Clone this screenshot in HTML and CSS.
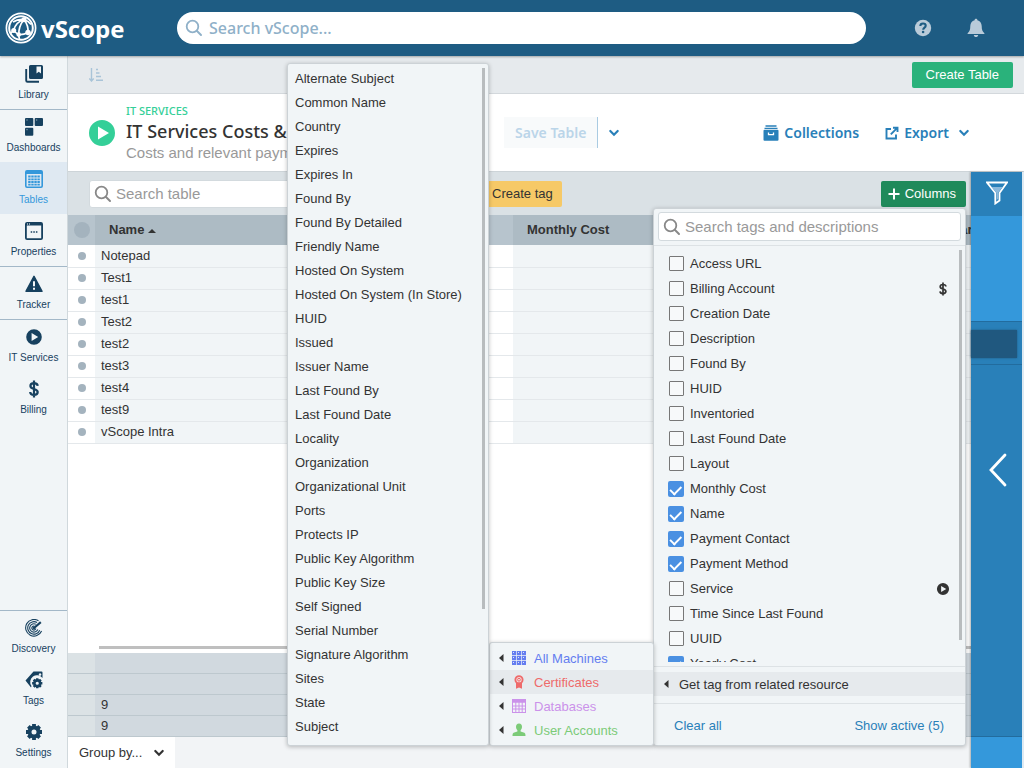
FILE: index.html
```html
<!DOCTYPE html>
<html lang="en">
<head>
    <meta charset="UTF-8">
    <meta name="viewport" content="width=device-width, initial-scale=1">
    <title>IT Services - vScope</title>
    <link rel="stylesheet" href="styles.css">
</head>
<body>
    <svg class="sprite" aria-hidden="true">
        <symbol id="i-search" viewBox="0 0 18 18"><circle cx="7.5" cy="7.5" r="5.8" fill="none" stroke="currentColor" stroke-width="1.8"/><path d="M12 12l4 4" stroke="currentColor" stroke-width="2" stroke-linecap="round"/></symbol>
        <symbol id="i-chevron" viewBox="0 0 12 12"><path d="M2.3 4l3.7 3.7L9.7 4" fill="none" stroke="currentColor" stroke-width="2.2" stroke-linecap="round"/></symbol>
        <symbol id="i-play" viewBox="0 0 18 18"><path fill-rule="evenodd" d="M9 1.200a7.800 7.800 0 1 0 0 15.600A7.800 7.800 0 0 0 9 1.200zM6.600 5.100l6.600 3.900-6.600 3.900z" fill="currentColor"/></symbol>
        <symbol id="i-dollar" viewBox="0 0 18 18"><path d="M9 .6v16.800M12.700 5.800C12.500 4 11 3.200 9 3.200S5.400 4.200 5.400 6c0 4 7.300 1.900 7.300 6 0 1.900-1.700 2.900-3.700 2.900S5.300 14 5.200 12" fill="none" stroke="currentColor" stroke-width="2.200"/></symbol>
        <symbol id="i-left" viewBox="0 0 6 10"><path d="M5.500 1v8L1 5z" fill="currentColor"/></symbol>
        <symbol id="i-gear" viewBox="0 0 18 18"><path d="M9 1v16M1 9h16M3.350 3.350l11.300 11.300M14.650 3.350l-11.300 11.300" stroke="currentColor" stroke-width="3.800"/><circle cx="9" cy="9" r="4.500" fill="#f1f5f7" stroke="currentColor" stroke-width="4"/></symbol>
    </svg>

    <header class="topbar">
        <a class="logo" href="#">
            <svg width="32" height="32" viewBox="0 0 32 32" fill="none" stroke="#fff">
                <circle cx="16" cy="16" r="14.600" stroke-width="1.700"/>
                <circle cx="16" cy="16" r="11.800" stroke-width="2"/>
                <path d="M19 7.500C14 9 10 13 8.500 18.500M19 7.500c-4 5-5.500 10-5 15M19 7.500c3 4 4.500 8 4 13M8.500 18.500c2 2 3.500 3 5 4 3.500.5 6.500-.5 9.500-2M8 10c3-2 7-3 11-2.500 3 1 5 2.500 7 5M8.500 18.500l-3 3M13.500 22.500l1 5M23 20.500l3 1" stroke-width="1.700"/>
                <g fill="#fff" stroke="none"><circle cx="19" cy="7.800" r="2.500"/><circle cx="8.700" cy="18.500" r="2.500"/><circle cx="13.700" cy="22.500" r="2.300"/><circle cx="23" cy="20.500" r="2.700"/></g>
            </svg>
            <span>vScope</span>
        </a>
        <label class="global-search">
            <svg width="18" height="18"><use href="#i-search"/></svg>
            <input type="search" placeholder="Search vScope..." aria-label="Search vScope">
        </label>
        <div class="topbar-actions">
            <button type="button" aria-label="Help">
                <svg width="18" height="18" viewBox="0 0 18 18"><circle cx="9" cy="9" r="8.200" fill="currentColor"/><path d="M6.300 7c.1-1.700 1.200-2.500 2.700-2.500s2.700.9 2.700 2.200c0 1.900-2.500 1.900-2.500 4" fill="none" stroke="#1e5c83" stroke-width="2.100"/><circle cx="9.100" cy="13" r="1.300" fill="#1e5c83"/></svg>
            </button>
            <button type="button" aria-label="Notifications">
                <svg width="18" height="20" viewBox="0 0 18 20"><path d="M9 .8c.9 0 1.400.6 1.400 1.400 2.700.6 4.200 2.800 4.300 5.700.1 3.600.5 5.300 2.700 7.300v.9H.6v-.9c2.200-2 2.600-3.700 2.700-7.300.1-2.900 1.600-5.100 4.300-5.700 0-.8.5-1.400 1.400-1.400zM6.800 17h4.400c-.2 1.400-1 2-2.200 2s-2-.6-2.200-2z" fill="currentColor"/></svg>
            </button>
        </div>
    </header>

    <div class="layout">
        <nav class="sidebar">
            <div class="nav-group">
                <a href="#"><svg width="18" height="18" viewBox="0 0 18 18"><path d="M1.200 4v11.500c0 .8.500 1.300 1.300 1.300H14" fill="none" stroke="currentColor" stroke-width="1.900"/><path fill-rule="evenodd" d="M5.500 0h11A1.500 1.500 0 0 1 18 1.500v11a1.500 1.500 0 0 1-1.500 1.500h-11A1.500 1.500 0 0 1 4 12.500v-11A1.500 1.500 0 0 1 5.500 0zM11.500 1.500v7L13.700 6.800 16 8.500v-7z" fill="currentColor"/></svg>Library</a>
            </div>
            <div class="nav-group">
                <a href="#"><svg width="18" height="18" viewBox="0 0 18 18" fill="currentColor"><rect width="8.300" height="8" rx="1"/><rect x="9.700" width="8.300" height="8" rx="1"/><rect y="9.700" width="8.300" height="8" rx="1"/><path d="M1.500 2h1M11.200 2h1M1.500 11.700h1" stroke="#b9cbd6" stroke-width="1"/></svg>Dashboards</a>
                <a href="#" class="active"><svg width="18" height="18" viewBox="0 0 18 18"><rect x=".8" y=".8" width="16.400" height="16.400" rx="1.200" fill="none" stroke="currentColor" stroke-width="1.600"/><path d="M1 2.500h16" stroke="currentColor" stroke-width="3"/><path d="M3.200 6.500h11.600M3.200 9.300h11.600M3.200 12h11.600M3.200 14.700h11.600" stroke="currentColor" stroke-width="1.800" stroke-dasharray="2.400 .67"/></svg>Tables</a>
                <a href="#"><svg width="18" height="18" viewBox="0 0 18 18"><rect x=".9" y=".9" width="16.200" height="16.200" rx="1.200" fill="none" stroke="currentColor" stroke-width="1.800"/><path d="M1 2.200h16" stroke="currentColor" stroke-width="2.600"/><path d="M5.700 10h1.500M8.300 10h1.500M10.900 10h1.500" stroke="currentColor" stroke-width="1.600"/><path d="M2 2h1M4 2h1" stroke="#fff"/></svg>Properties</a>
            </div>
            <div class="nav-group">
                <a href="#"><svg width="18" height="18" viewBox="0 0 18 18"><path d="M9 1.300L17 16.300H1z" fill="currentColor" stroke="currentColor" stroke-width="1.500" stroke-linejoin="round"/><path d="M9 6.300v5M9 12.800v2" stroke="#fff" stroke-width="1.900"/></svg>Tracker</a>
            </div>
            <div class="nav-group">
                <a href="#"><svg width="18" height="18"><use href="#i-play"/></svg>IT Services</a>
                <a href="#"><svg width="18" height="18"><use href="#i-dollar"/></svg>Billing</a>
            </div>
            <div class="nav-group nav-bottom">
                <a href="#"><svg width="18" height="18" viewBox="0 0 18 18" fill="none" stroke="currentColor"><path d="M13.500 1.800A8.300 8.300 0 1 0 16.600 12M12 3.500A6.200 6.200 0 1 0 14.700 11.200M10.800 5.200A4.200 4.200 0 1 0 12.800 10.500M9.500 7.200A2 2 0 1 0 10.800 9.500" stroke-width="1.100"/><path d="M9 9l6.800-5.800" stroke-width="2.200"/><circle cx="9" cy="9" r="1" fill="currentColor"/></svg>Discovery</a>
                <a href="#"><svg width="20" height="18" viewBox="0 0 20 18"><path fill-rule="evenodd" d="M9.500 .5h8q1 0 1 1v5.500a6.300 6.300 0 0 0-11 8l-.5 1.500-5.500-7zM16 2.200a1.300 1.300 0 1 0 .1 0z" fill="currentColor"/><svg x="7.500" y="6.500" width="11.500" height="11.500"><use href="#i-gear"/></svg></svg>Tags</a>
                <a href="#"><svg width="18" height="18"><use href="#i-gear"/></svg>Settings</a>
            </div>
        </nav>

        <main class="main">
            <div class="actions-bar">
                <button type="button" class="sort-btn" aria-label="Sort">
                    <svg width="14" height="14" viewBox="0 0 14 14" fill="none" stroke="currentColor" stroke-width="1.400"><path d="M2.500 0v12.500M.3 10.500l2.200 2.500 2.200-2.500M7 1.500h2M7 5h3.500M7 8.500h5M7 12.300h7"/></svg>
                </button>
                <button type="button" class="btn btn-create">Create Table</button>
            </div>

            <div class="title-bar">
                <svg class="title-icon" width="30" height="30"><use href="#i-play"/></svg>
                <div class="title-text">
                    <div class="category">IT Services</div>
                    <h1>IT Services Costs &amp; Payments</h1>
                    <p>Costs and relevant payment information for services</p>
                </div>
                <div class="save-group">
                    <button type="button" class="save-btn" disabled>Save Table</button>
                    <button type="button" class="save-more" aria-label="Save options"><svg width="12" height="12"><use href="#i-chevron"/></svg></button>
                </div>
                <div class="title-links">
                    <a href="#"><svg width="16" height="16" viewBox="0 0 16 16"><path d="M2.500 1h11M1.500 3.300h13" stroke="currentColor" stroke-width="1.300"/><rect x=".5" y="4.800" width="15" height="11" rx="1" fill="currentColor"/><path d="M5.500 7.500v2.200h5V7.500" fill="none" stroke="#fff" stroke-width="1.300"/></svg>Collections</a>
                    <a href="#"><svg width="14" height="14" viewBox="0 0 14 14" fill="none" stroke="currentColor" stroke-width="1.900"><path d="M6 3H1.500v9.500H11V8.500M8 1.700h4.500V6M12 2.200L5.800 8.400"/></svg>Export<svg class="caret" width="12" height="12"><use href="#i-chevron"/></svg></a>
                </div>
            </div>

            <div class="workspace">
                <section class="table-area">
                    <div class="table-tools">
                        <label class="field table-search">
                            <svg width="18" height="18"><use href="#i-search"/></svg>
                            <input type="search" placeholder="Search table" aria-label="Search table">
                        </label>
                        <button type="button" class="btn btn-tag">Create tag</button>
                        <button type="button" class="btn btn-columns"><svg width="12" height="12" viewBox="0 0 12 12"><path d="M6 .5v11M.5 6h11" stroke="currentColor" stroke-width="2"/></svg>Columns</button>
                    </div>

                    <div class="table-scroll">
                        <table class="grid">
                            <thead>
                                <tr><th class="pick"><span class="dot dot-lg"></span></th><th>Name <span class="sorted"></span></th><th>Payment Contact</th><th>Monthly Cost</th><th>Payment Method</th><th>Yearly Cost</th></tr>
                            </thead>
                            <tbody>
                                <tr><td class="pick"><span class="dot"></span></td><td>Notepad</td><td></td><td></td><td></td><td></td></tr>
                                <tr><td class="pick"><span class="dot"></span></td><td>Test1</td><td></td><td></td><td></td><td></td></tr>
                                <tr><td class="pick"><span class="dot"></span></td><td>test1</td><td></td><td></td><td></td><td></td></tr>
                                <tr><td class="pick"><span class="dot"></span></td><td>Test2</td><td></td><td></td><td></td><td></td></tr>
                                <tr><td class="pick"><span class="dot"></span></td><td>test2</td><td></td><td></td><td></td><td></td></tr>
                                <tr><td class="pick"><span class="dot"></span></td><td>test3</td><td></td><td></td><td></td><td></td></tr>
                                <tr><td class="pick"><span class="dot"></span></td><td>test4</td><td></td><td></td><td></td><td></td></tr>
                                <tr><td class="pick"><span class="dot"></span></td><td>test9</td><td></td><td></td><td></td><td></td></tr>
                                <tr><td class="pick"><span class="dot"></span></td><td>vScope Intra</td><td></td><td></td><td></td><td></td></tr>
                            </tbody>
                        </table>
                    </div>
                    <div class="h-scroll"></div>
                    <div class="summary-wrap">
                        <table class="grid summary">
                            <tbody>
                                <tr><td class="pick"></td><td></td><td></td><td></td><td></td><td></td></tr>
                                <tr><td class="pick"></td><td></td><td></td><td></td><td></td><td></td></tr>
                                <tr><td class="pick"></td><td>9</td><td></td><td></td><td></td><td></td></tr>
                                <tr><td class="pick"></td><td>9</td><td></td><td></td><td></td><td></td></tr>
                            </tbody>
                        </table>
                    </div>
                    <div class="bottom-bar">
                        <div class="group-by">
                            <select aria-label="Group by"><option>Group by...</option></select>
                            <svg width="12" height="12"><use href="#i-chevron"/></svg>
                        </div>
                    </div>

                    <!-- column picker with its two fly-out menus -->
                    <div class="panel picker">
                        <div class="picker-search">
                            <label class="field">
                                <svg width="18" height="18"><use href="#i-search"/></svg>
                                <input type="search" placeholder="Search tags and descriptions" aria-label="Search tags and descriptions">
                            </label>
                        </div>
                        <div class="picker-list">
                            <label><input type="checkbox">Access URL</label>
                            <label><input type="checkbox">Billing Account<svg width="14" height="14"><use href="#i-dollar"/></svg></label>
                            <label><input type="checkbox">Creation Date</label>
                            <label><input type="checkbox">Description</label>
                            <label><input type="checkbox">Found By</label>
                            <label><input type="checkbox">HUID</label>
                            <label><input type="checkbox">Inventoried</label>
                            <label><input type="checkbox">Last Found Date</label>
                            <label><input type="checkbox">Layout</label>
                            <label><input type="checkbox" checked>Monthly Cost</label>
                            <label><input type="checkbox" checked>Name</label>
                            <label><input type="checkbox" checked>Payment Contact</label>
                            <label><input type="checkbox" checked>Payment Method</label>
                            <label><input type="checkbox">Service<svg width="14" height="14"><use href="#i-play"/></svg></label>
                            <label><input type="checkbox">Time Since Last Found</label>
                            <label><input type="checkbox">UUID</label>
                            <label><input type="checkbox" checked>Yearly Cost</label>
                            <span class="thumb"></span>
                        </div>
                        <div class="picker-related">
                            <button type="button"><svg width="6" height="10"><use href="#i-left"/></svg>Get tag from related resource</button>
                        </div>
                        <div class="picker-footer">
                            <a href="#">Clear all</a>
                            <a href="#">Show active (5)</a>
                        </div>

                        <div class="panel related">
                            <button type="button" class="machines"><svg width="6" height="10"><use href="#i-left"/></svg><svg width="14" height="14" viewBox="0 0 14 14" fill="currentColor"><path d="M0 0h4.200v4.200H0zM4.900 0h4.200v4.200H4.900zM9.800 0H14v4.200H9.800zM0 4.900h4.200v4.200H0zM4.900 4.900h4.200v4.200H4.900zM9.800 4.900H14v4.200H9.800zM0 9.800h4.200V14H0zM4.900 9.800h4.200V14H4.900zM9.800 9.800H14V14H9.800z"/><path d="M1 1.500h1M6 1.500h1M11 1.500h1M1 6.500h1M6 6.500h1M11 6.500h1M1 11.500h1M6 11.500h1M11 11.500h1" stroke="#fff" stroke-width=".8"/></svg>All Machines</button>
                            <button type="button" class="certificates"><svg width="6" height="10"><use href="#i-left"/></svg><svg width="14" height="14" viewBox="0 0 14 14"><path d="M4 7.500v6.200l3-1.200 3 1.200V7.500z" fill="currentColor"/><circle cx="7" cy="4.700" r="3.600" fill="#f6dede" stroke="currentColor" stroke-width="1.900"/><circle cx="7" cy="4.700" r="1.400" fill="none" stroke="currentColor"/></svg>Certificates</button>
                            <button type="button" class="databases"><svg width="6" height="10"><use href="#i-left"/></svg><svg width="14" height="14" viewBox="0 0 14 14"><rect x=".5" y=".5" width="13" height="13" fill="none" stroke="currentColor"/><path d="M0 2h14" stroke="currentColor" stroke-width="3.500"/><path d="M0 7h14M0 10h14M3.800 3v11M7 3v11M10.200 3v11" stroke="currentColor"/></svg>Databases</button>
                            <button type="button" class="accounts"><svg width="6" height="10"><use href="#i-left"/></svg><svg width="14" height="14" viewBox="0 0 14 14"><path d="M7 .5c2 0 3 1.300 3 3.200 0 1.600-.6 2.700-1.400 3.500v1.300l3.800 1.300c.8.4 1.100 1.200 1.100 3.200H.5c0-2 .3-2.800 1.100-3.200l3.800-1.300V7.200C4.600 6.400 4 5.300 4 3.700 4 1.800 5 .5 7 .5z" fill="currentColor"/></svg>User Accounts</button>
                        </div>

                        <div class="panel tag-menu">
                            <ul>
                                <li>Alternate Subject</li>
                                <li>Common Name</li>
                                <li>Country</li>
                                <li>Expires</li>
                                <li>Expires In</li>
                                <li>Found By</li>
                                <li>Found By Detailed</li>
                                <li>Friendly Name</li>
                                <li>Hosted On System</li>
                                <li>Hosted On System (In Store)</li>
                                <li>HUID</li>
                                <li>Issued</li>
                                <li>Issuer Name</li>
                                <li>Last Found By</li>
                                <li>Last Found Date</li>
                                <li>Locality</li>
                                <li>Organization</li>
                                <li>Organizational Unit</li>
                                <li>Ports</li>
                                <li>Protects IP</li>
                                <li>Public Key Algorithm</li>
                                <li>Public Key Size</li>
                                <li>Self Signed</li>
                                <li>Serial Number</li>
                                <li>Signature Algorithm</li>
                                <li>Sites</li>
                                <li>State</li>
                                <li>Subject</li>
                                <li>System Title</li>
                            </ul>
                            <span class="thumb"></span>
                        </div>
                    </div>
                </section>

                <aside class="filter-rail">
                    <button type="button" class="filter-btn" aria-label="Filter">
                        <svg width="22" height="24" viewBox="0 0 22 24"><path d="M1 1.500h20l-7.500 10.500v7.500L9.300 22.500V12z" fill="none" stroke="#fff" stroke-width="1.800"/><path d="M5.500 6h11l-4.500 6v6l-1.500 1v-7z" fill="#8bb9dc"/></svg>
                    </button>
                    <div class="filter-space"></div>
                    <div class="filter-item"><span></span></div>
                    <button type="button" class="filter-open" aria-label="Open filter panel">
                        <svg width="18" height="34" viewBox="0 0 18 34"><path d="M16 2L2 17l14 15" fill="none" stroke="#fff" stroke-width="2.800" stroke-linecap="round"/></svg>
                    </button>
                </aside>
            </div>
        </main>
    </div>
</body>
</html>
```
FILE: styles.css
```css
* {
    box-sizing: border-box;
}

body {
    margin: 0;
    height: 100vh;
    display: flex;
    flex-direction: column;
    overflow: hidden;
    font-family: "Liberation Sans", Arial, sans-serif;
    font-size: 13px;
    color: #333;
    background: #f2f4f6;
}

button, input, select {
    font: inherit;
    color: inherit;
    border: 0;
    background: none;
    margin: 0;
    padding: 0;
}

button {
    cursor: pointer;
}

a {
    color: #2980b9;
    text-decoration: none;
}

svg {
    flex: none;
}

.sprite {
    position: absolute;
    width: 0;
    height: 0;
}

/* top bar */
.topbar {
    display: flex;
    align-items: center;
    height: 56px;
    flex: none;
    background: #1e5c83;
    box-shadow: 0 1px 2px rgba(0, 0, 0, 0.3);
    z-index: 2;
}

.logo {
    display: flex;
    align-items: center;
    gap: 4px;
    width: 177px;
    padding-left: 5px;
    color: #fff;
    font-family: "Open Sans", sans-serif;
    font-size: 24px;
    font-weight: 700;
}

.global-search {
    display: flex;
    align-items: center;
    gap: 6px;
    flex: 1;
    height: 32px;
    padding: 0 16px 0 8px;
    border-radius: 16px;
    background: #fff;
    color: #8fb0c8;
    font-family: "Noto Sans", sans-serif;
    font-size: 16px;
    font-weight: 500;
}

input {
    flex: 1;
    min-width: 0;
    outline: 0;
}

input::placeholder {
    color: #8fb0c8;
    opacity: 1;
}

.topbar-actions {
    display: flex;
    justify-content: flex-end;
    gap: 35px;
    width: 158px;
    padding-right: 39px;
    color: #b9cbd9;
}

.topbar-actions button {
    display: flex;
    align-items: center;
}

.layout {
    display: flex;
    flex: 1;
    min-height: 0;
}

/* left navigation */
.sidebar {
    display: flex;
    flex-direction: column;
    width: 68px;
    flex: none;
    padding: 1px 0;
    background: #f1f5f7;
    border-right: 1px solid #d0d8dc;
}

.nav-group + .nav-group {
    border-top: 1px solid #a3b8c8;
}

.nav-group a {
    display: flex;
    flex-direction: column;
    align-items: center;
    gap: 4px;
    height: 52px;
    padding-top: 8px;
    font-size: 10px;
    line-height: 16px;
    color: #17415f;
}

.nav-group a.active {
    background: #dfe9f2;
    color: #3498db;
}

.nav-group.nav-bottom {
    margin-top: auto;
}

/* header rows */
.main {
    display: flex;
    flex-direction: column;
    flex: 1;
    min-width: 0;
}

.actions-bar {
    display: flex;
    align-items: center;
    justify-content: space-between;
    height: 38px;
    padding: 0 11px 0 21px;
    background: #e6eaed;
    border-bottom: 1px solid #d3d8dc;
}

.sort-btn {
    color: #a9c4d8;
    display: flex;
}

.btn {
    display: flex;
    align-items: center;
    gap: 5px;
    height: 26px;
    border-radius: 2px;
}

.btn-create {
    padding: 0 14px;
    background: #2ab27b;
    color: #fff;
}

.title-bar {
    display: flex;
    align-items: center;
    height: 78px;
    padding: 0 54px 0 19px;
    background: #fff;
    border-bottom: 1px solid #cdd4d8;
}

.title-icon {
    color: #34cf98;
}

.title-text {
    flex: 0 1 387px;
    min-width: 0;
    padding-left: 9px;
    white-space: nowrap;
    overflow: hidden;
}

.category {
    font-family: "Noto Sans", sans-serif;
    font-size: 11px;
    line-height: 14px;
    text-transform: uppercase;
    color: #34cf98;
    font-weight: 500;
}

.title-text h1 {
    margin: 0;
    font-family: "Noto Sans", sans-serif;
    font-size: 18px;
    line-height: 26px;
    font-weight: 500;
}

.title-text p {
    margin: 0;
    font-size: 15px;
    line-height: 17px;
    color: #999;
}

.save-group, .title-links {
    display: flex;
    align-items: center;
    font-family: "Noto Sans", sans-serif;
    font-size: 14px;
    font-weight: 600;
}

.save-btn {
    height: 31px;
    padding: 0 11px;
    background: #f8fafb;
    color: #bbd5e9;
    border-right: 1px solid #a9cbe2;
}

.save-more {
    display: flex;
    padding: 10px;
    color: #2980b9;
}

.title-links {
    gap: 26px;
    margin-left: auto;
}

.title-links a {
    display: flex;
    align-items: center;
    gap: 5px;
}

.title-links .caret {
    margin-left: 4px;
}

/* table */
.workspace {
    display: flex;
    flex: 1;
    min-height: 0;
}

.table-area {
    position: relative;
    display: flex;
    flex-direction: column;
    flex: 1;
    min-width: 0;
}

.table-tools {
    display: flex;
    align-items: center;
    gap: 12px;
    height: 43px;
    flex: none;
    padding: 0 5px 0 21px;
    background: #dae1e5;
}

.field {
    display: flex;
    align-items: center;
    gap: 4px;
    height: 28px;
    padding: 0 4px;
    background: #fff;
    border: 1px solid #d3dade;
    border-radius: 3px;
    font-size: 15px;
    color: #888;
}

.field input::placeholder {
    color: #999;
}

.table-search {
    flex: 0 1 381px;
}

.btn-tag {
    padding: 0 9px 0 10px;
    background: #f6c967;
}

.btn-columns {
    margin-left: auto;
    padding: 0 10px 0 7px;
    background: #1f8a5b;
    color: #fff;
}

.table-scroll {
    flex: 1;
    min-height: 0;
    overflow: hidden;
    background: #fff;
}

.grid {
    width: 1072px;
    table-layout: fixed;
    border-collapse: collapse;
}

.grid th, .grid td {
    height: 22px;
    padding: 0 6px;
    text-align: left;
    line-height: 16px;
    border-bottom: 1px solid #e4e8eb;
}

.grid th {
    height: 30px;
    padding: 0 14px;
    background: #b7c4cd;
    border: 0;
}

.grid th:nth-child(even) {
    background: #adbbc4;
}

.grid td:nth-child(even) {
    background: #f1f5f7;
}

.grid .pick {
    width: 27px;
    padding: 0;
}

.dot {
    display: block;
    width: 8px;
    height: 8px;
    margin: auto;
    border-radius: 50%;
    background: #a4b3be;
}

.dot-lg {
    width: 16px;
    height: 16px;
}

.sorted {
    display: inline-block;
    vertical-align: middle;
    border: 4px solid transparent;
    border-top: 0;
    border-bottom-color: #333;
}

.h-scroll {
    height: 7px;
    flex: none;
    margin-left: 31px;
    border-top: 3px solid #bfbfbf;
    background: #fff;
    box-shadow: -31px 0 #fff;
}

.summary-wrap {
    flex: none;
    overflow: hidden;
}

.grid.summary td {
    height: 21px;
    background: #dbe2e5;
    border-color: #bdc8ce;
}

.grid.summary td:nth-child(even) {
    background: #d1d9df;
}

.bottom-bar {
    height: 31px;
    flex: none;
    display: flex;
}

.group-by {
    display: flex;
    align-items: center;
    width: 107px;
    padding-right: 10px;
    background: #fff;
}

.group-by select {
    flex: 1;
    min-width: 0;
    padding-left: 11px;
    appearance: none;
}

/* column picker */
.panel {
    position: absolute;
    background: #f1f5f7;
    border: 1px solid #ccd2d6;
    border-radius: 3px;
    box-shadow: 0 1px 4px rgba(0, 0, 0, 0.25);
}

.picker {
    display: flex;
    flex-direction: column;
    top: 36px;
    bottom: 22px;
    right: 5px;
    width: 313px;
    z-index: 3;
}

.picker-search {
    padding: 3px 4px 4px;
    border-bottom: 1px solid #dde2e5;
}

.picker-search .field {
    height: 29px;
}

.picker-list {
    position: relative;
    flex: 1;
    min-height: 0;
    margin-bottom: 4px;
    padding-top: 5px;
    overflow: hidden;
}

.picker-list label {
    display: flex;
    align-items: center;
    gap: 6px;
    height: 25px;
    padding: 0 15px 0 14px;
}

.picker-list label svg {
    margin-left: auto;
}

.picker-list input {
    appearance: none;
    flex: none;
    width: 15px;
    height: 15px;
    margin-left: 1px;
    border: 1px solid #777;
    border-radius: 1px;
    background: #f7f9fa;
}

.picker-list input:checked {
    display: flex;
    justify-content: center;
    width: 16px;
    height: 16px;
    margin-left: 0;
    border: 0;
    border-radius: 2px;
    background: #4a90e2;
}

.picker-list input:checked::after {
    content: "";
    width: 5px;
    height: 9px;
    margin-top: 3px;
    border: solid #fff;
    border-width: 0 2px 2px 0;
    transform: rotate(45deg);
    transform-origin: 50% 40%;
}

.thumb {
    position: absolute;
    top: 4px;
    right: 3px;
    bottom: 22px;
    width: 3px;
    background: #b8bcbe;
}

.picker-related {
    padding: 5px 0 7px;
    border: solid #dde2e5;
    border-width: 1px 0;
}

.picker-related button, .related button {
    display: flex;
    align-items: center;
    gap: 10px;
    width: 100%;
    height: 24px;
    padding-left: 9px;
}

.picker-related button {
    background: #e6eaed;
}

.picker-footer {
    display: flex;
    align-items: center;
    justify-content: space-between;
    height: 41px;
    padding: 2px 21px 0 20px;
}

.related {
    right: 100%;
    bottom: -1px;
    width: 165px;
    padding: 3px 0;
}

.related button {
    gap: 8px;
    padding-left: 8px;
}

.related button > svg:first-child {
    color: #333;
}

.related .machines {
    color: #647df0;
}

.related .certificates {
    background: #e6eaed;
    color: #ee6b6b;
}

.related .databases {
    color: #cb92ea;
}

.related .accounts {
    color: #7ccb78;
}

.tag-menu {
    right: 476px;
    bottom: -1px;
    width: 202px;
    height: calc(100vh - 85px);
    overflow: hidden;
}

.tag-menu ul {
    margin: 0;
    padding: 3px 7px;
    list-style: none;
    line-height: 24px;
}

.tag-menu .thumb {
    bottom: 136px;
}

/* filter rail */
.filter-rail {
    display: flex;
    flex-direction: column;
    width: 53px;
    flex: none;
    background: #3498db;
    border-right: 2px solid #dfeaf2;
    padding-bottom: 31px;
    box-shadow: -1px 0 2px rgba(0, 0, 0, 0.3);
    z-index: 1;
}

.filter-btn {
    height: 44px;
    background: #2980b9;
}

.filter-space {
    height: 105px;
}

.filter-item {
    height: 44px;
    padding: 8px 5px 6px 0;
    background: #2980b9;
    border: solid #226c9e;
    border-width: 1px 0;
}

.filter-item span {
    display: block;
    height: 100%;
    background: #20587f;
    box-shadow: 0 0 2px #20587f;
}

.filter-open {
    flex: 1;
    padding: 0 0 158px 3px;
    background: #2980b9;
    border-bottom: 1px solid #226c9e;
}
```
